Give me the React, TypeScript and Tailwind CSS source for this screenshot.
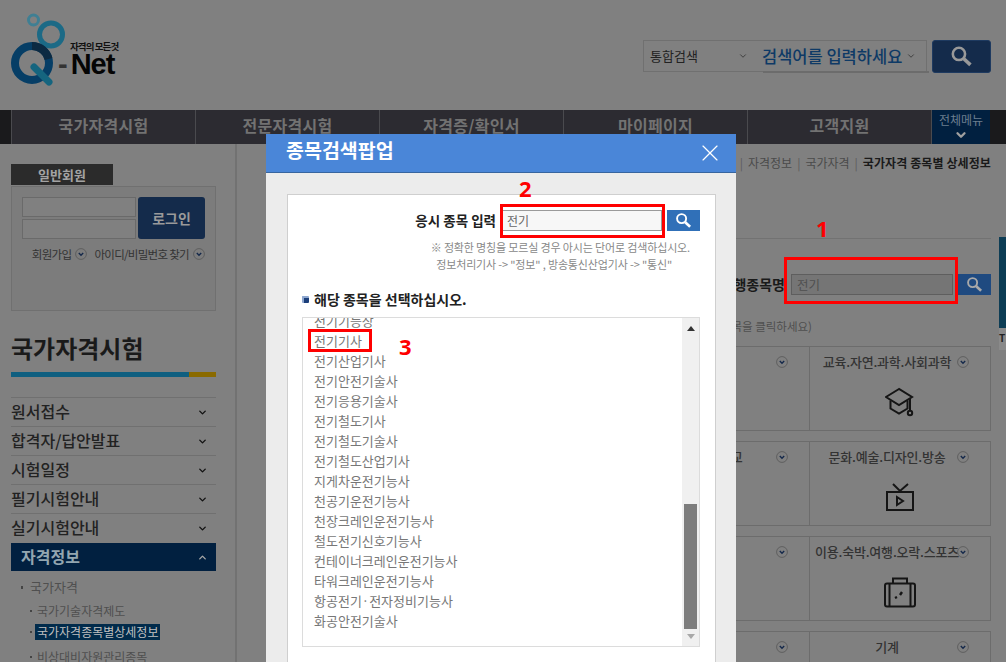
import { ChevronDown, ChevronUp, X } from "lucide-react";

const sideMenus = ["원서접수", "합격자/답안발표", "시험일정", "필기시험안내", "실기시험안내"];
const navMenus = ["국가자격시험", "전문자격시험", "자격증/확인서", "마이페이지", "고객지원"];
const results = [
    "전기기능장", "전기기사", "전기산업기사", "전기안전기술사", "전기응용기술사", "전기철도기사",
    "전기철도기술사", "전기철도산업기사", "지게차운전기능사", "천공기운전기능사", "천장크레인운전기능사",
    "철도전기신호기능사", "컨테이너크레인운전기능사", "타워크레인운전기능사", "항공전기·전자정비기능사", "화공안전기술사",
];

const Search = ({ size, color }: { size: number; color: string }) => (
    <svg width={size} height={size} viewBox="0 0 18 18" fill="none" stroke={color}>
        <circle cx="7" cy="7" r="4.8" strokeWidth="2" />
        <path d="M10.8 10.8 16 15.6" strokeWidth="2.8" />
    </svg>
);

const RoundChevron = ({ size = 12 }: { size?: number }) => (
    <svg width={size} height={size} viewBox="0 0 12 12" fill="none" className="shrink-0">
        <circle cx="6" cy="6" r="5.4" stroke="#5f5f5f" />
        <path d="M3.8 5 6 7.2 8.2 5" stroke="#14284a" strokeWidth="1.4" />
    </svg>
);

const Logo = () => (
    <div className="relative w-[110px] h-[74px] ml-[11px] mt-[13px]">
        <svg width="56" height="74" viewBox="0 0 56 74" fill="none" className="absolute left-0 top-0">
            <circle cx="22.5" cy="7" r="5" stroke="#3f7f93" strokeWidth="3" />
            <circle cx="40" cy="21.5" r="11.5" stroke="#1c6a86" strokeWidth="5" />
            <circle cx="21" cy="50" r="17" stroke="#063e66" strokeWidth="8" />
            <path d="M21 33a17 17 0 0 1 16.5 13" stroke="#0c2a42" strokeWidth="8" />
            <path d="M23 54 38 69" stroke="#15657f" strokeWidth="7" strokeLinecap="round" />
        </svg>
        <span className="absolute left-[59px] top-[27px] text-[9.5px] leading-3 font-bold tracking-[-0.9px] whitespace-nowrap text-[#111]">자격의 모든것</span>
        <span className="absolute left-[47px] top-[39px] text-[29px] leading-6 font-bold tracking-[-1px] whitespace-nowrap text-[#050505] font-['Liberation_Sans',sans-serif]"><span className="mr-[4px] text-[#333]">-</span>Net</span>
    </div>
);

const Header = () => (
    <header className="h-[110px] flex justify-between">
        <Logo />
        <div className="flex gap-[5px] mt-[40px] mr-[15px] h-[33px]">
            <div className="relative w-[284px] h-[32px] border border-[#707070] flex items-center pl-[6px] text-[13px] text-[#222]">
                <span className="w-[88px]">통합검색</span>
                <ChevronDown size={10} color="#333" strokeWidth={2} />
                <span className="ml-[14px] text-[16.5px] font-medium text-[#0e3a66] whitespace-nowrap">검색어를 입력하세요</span>
                <ChevronDown size={10} color="#333" strokeWidth={2} className="ml-[4px]" />
                <div className="absolute left-[119px] -right-[3px] -bottom-[2px] h-[2px] bg-[#6c6c6c]" />
            </div>
            <button className="w-[59px] rounded-[3px] bg-[#142b4b] border border-[#1e3a60] flex items-center justify-center">
                <Search size={23} color="#999" />
            </button>
        </div>
    </header>
);

const Nav = () => (
    <nav className="h-[34px] flex bg-[#1a1a1c]">
        <div className="w-[11px]" />
        {navMenus.map(menu => (
            <div key={menu} className="w-[184px] border-l border-[#4a4a4e] bg-[#2c2b31] flex items-center justify-center pb-[4px] text-[16px] tracking-[0.3px] font-bold text-[#727272]">{menu}</div>
        ))}
        <div className="w-[59px] border-l border-[#4a4a4e] bg-[#012040] flex flex-col items-center text-[12px] leading-4 text-[#6d7f8f] pt-[2px]">
            전체메뉴
            <ChevronDown size={14} color="#a0a0a0" strokeWidth={4} />
        </div>
    </nav>
);

const Sidebar = () => (
    <aside className="w-[237px] shrink-0 border-r-2 border-[#727272] pl-[11px] pt-[20px] pr-[19px]">
        <div className="w-[102px] h-[21px] bg-[#2b2b2b] text-[13px] font-bold text-[#a3a3a3] flex items-center justify-center">일반회원</div>
        <div className="mt-px h-[125px] border border-[#707070] bg-[#7c7c7c] pt-[10px] px-[10px]">
            <div className="flex gap-[2px]">
                <div className="flex flex-col gap-[2px]">
                    <div className="w-[114px] h-5 border border-[#6a6a6a] bg-[#808080]" />
                    <div className="w-[114px] h-5 border border-[#6a6a6a] bg-[#808080]" />
                </div>
                <button className="w-[67px] h-[42px] rounded-[3px] bg-[#142b4b] text-[14px] font-bold text-[#9a9a9a]">로그인</button>
            </div>
            <div className="mt-[7px] flex items-center justify-end gap-[4px] text-[11.5px] leading-4 tracking-[-0.7px] text-[#333] whitespace-nowrap">
                <span>회원가입</span>
                <RoundChevron />
                <span className="ml-[3px]">아이디/비밀번호 찾기</span>
                <RoundChevron />
            </div>
        </div>
        <h2 className="mt-[21px] text-[24px] leading-8 font-bold text-[#1a1a1a]">국가자격시험</h2>
        <div className="mt-[8px] h-[5px] flex">
            <div className="w-[178px] bg-[#0f5f80]" />
            <div className="flex-1 bg-[#8a6a00]" />
        </div>
        <ul className="mt-5">
            {sideMenus.map(menu => (
                <li key={menu} className="h-[29px] border-t border-[#707070] flex items-center justify-between pr-[8px] text-[16px] font-medium text-[#222]">
                    <span className="-mt-[3px]">{menu}</span>
                    <ChevronDown size={11} color="#111" strokeWidth={3} />
                </li>
            ))}
        </ul>
        <div className="h-[28px] mt-px bg-[#012040] flex items-center justify-between pl-[10px] pr-[8px] text-[16px] font-bold text-[#93a6b0]">
            <span className="-mt-[2px]">자격정보</span>
            <ChevronUp size={11} color="#a8a8a8" strokeWidth={3} />
        </div>
        <div className="mt-[8px] pl-[10px] text-[12px] leading-4 text-[#4f4f4f]">
            <div className="flex items-center gap-[7px] text-[13px]">
                <span className="w-[2px] h-[3px] bg-[#444]" />
                국가자격
            </div>
            <div className="mt-[8px] pl-[9px] flex items-center gap-[5px]">
                <span className="w-[2px] h-[2px] bg-[#444]" />
                국가기술자격제도
            </div>
            <div className="mt-[1px] pl-[9px] flex items-center gap-[3px] h-[24px] whitespace-nowrap">
                <span className="w-[2px] h-[2px] bg-[#444]" />
                <span className="bg-[#012b4b] text-[#c0c0c0] w-[125px] h-[16px] pl-[2px]">국가자격종목별상세정보</span>
            </div>
            <div className="pl-[9px] mt-[5px] flex items-center gap-[5px] whitespace-nowrap">
                <span className="w-[2px] h-[2px] bg-[#444]" />
                비상대비자원관리종목
            </div>
        </div>
    </aside>
);

const Cap = () => (
    <svg width="30" height="30" viewBox="0 0 30 30" fill="none" stroke="#151515" strokeWidth="2">
        <path d="M14 2 1 10l13 8 13-8z" />
        <path d="M5.5 13.5v8l8.5 5 8.5-5v-8" />
        <path d="M25 11v13" />
        <circle cx="25" cy="26" r="2.2" />
    </svg>
);

const Tv = () => (
    <svg width="30" height="30" viewBox="0 0 30 30" fill="none" stroke="#151515" strokeWidth="2">
        <path d="M2 10h26v18H2z" />
        <path d="M8 2l7 7 8-7" />
        <path d="M12 15l6 4-6 4z" />
    </svg>
);

const Suitcase = () => (
    <svg width="34" height="32" viewBox="0 0 34 32" fill="none" stroke="#151515" strokeWidth="2">
        <rect x="2" y="6.5" width="30" height="23" rx="2" />
        <path d="M10 6V1.5h14V6" />
        <path d="M6.5 7v23M27.5 7v23" />
        <path d="M19 15l-2 3M14 20l-2 1" strokeWidth="2.4" />
    </svg>
);

const cards = [
    { left: "금융.보험", right: "교육.자연.과학.사회과학", icon: <Cap /> },
    { left: "사회복지.종교", right: "문화.예술.디자인.방송", icon: <Tv /> },
    { left: "경비.청소", right: "이용.숙박.여행.오락.스포츠", icon: <Suitcase /> },
    { left: "광업자원", right: "기계", icon: null },
];

const Card = ({ title, icon, first }: { title: string; icon?: React.ReactNode; first?: boolean }) => (
    <div className={`${first ? "border-r-0" : ""} w-[182px] h-[85px] border border-[#6c6c6c] flex flex-col items-center pt-[3px]`}>
        <div className="w-full h-[24px] flex items-center pr-[26px] relative">
            <span className="flex-1 text-center text-[13px] font-medium tracking-[-0.2px] text-[#333] whitespace-nowrap">{title}</span>
            <span className="absolute right-[21px] top-[6px]"><RoundChevron /></span>
        </div>
        <div className="mt-[13px]">{icon}</div>
    </div>
);

const Content = () => (
    <main className="flex-1 min-w-0 relative pr-[15px]">
        <div className="h-[27px] flex items-end justify-end gap-[5px] text-[12px] leading-4 text-[#4a4a4a] whitespace-nowrap">
            <span className="text-[#5c5c5c]">|</span>
            자격정보
            <span className="text-[#5c5c5c]">|</span>
            국가자격
            <span className="text-[#5c5c5c]">|</span>
            <b className="text-[#1a1a1a] tracking-[0.1px]">국가자격 종목별 상세정보</b>
        </div>
        <div className="mt-[67px] ml-[60px] border-t border-[#727272]">
            <div className="mt-[35px] flex items-center justify-end h-[21px]">
                <b className="text-[14px] text-[#1a1a1a] mr-[6px]">시행종목명</b>
                <div className="w-[162px] h-[21px] border border-[#5e5e5e] bg-[#757575] text-[12.5px] text-[#4f4f4f] pl-[5px] leading-[19px] mr-[5px]">전기</div>
                <button className="w-[33px] h-[21px] bg-[#1f4a80] flex items-center justify-center"><Search size={17} color="#a9a9a9" /></button>
            </div>
            <p className="mt-[23px] text-right pr-[179px] text-[11.5px] leading-4 text-[#4f4f4f] whitespace-nowrap">종목을 클릭하세요)</p>
            <div className="mt-[12px] grid grid-cols-[182px_182px] justify-end gap-y-[10px]">
                {cards.map(card => (
                    <div key={card.right} className="contents">
                        <Card title={card.left} first />
                        <Card title={card.right} icon={card.icon} />
                    </div>
                ))}
            </div>
        </div>
        <div className="absolute right-0 top-[93px] w-[7px] h-[113px] bg-[#0d3d55] flex flex-col justify-end">
            <div className="h-[22px] bg-[#8a8a8a] text-[10px] leading-5 font-bold text-[#222]">T</div>
        </div>
    </main>
);

const Marker = ({ className, label, labelClass }: { className: string; label: string; labelClass: string }) => (
    <>
        <div className={`absolute border-[3px] border-[#ff0000] pointer-events-none ${className}`} />
        <span className={`absolute text-[22px] leading-6 font-bold text-[#ff0000] font-['Open_Sans',sans-serif] ${labelClass}`}>{label}</span>
    </>
);

const Modal = () => (
    <div className="absolute left-[266px] top-[134px] w-[470px] h-[528px] bg-[#ececec] overflow-hidden">
        <div className="h-[39px] bg-[#4a86d8] border-b border-[#37659f] flex items-center justify-between pl-[20px] pr-[12px]">
            <h3 className="text-[19.5px] leading-7 -mt-[6px] font-bold text-white">종목검색팝업</h3>
            <X size={28} color="#fff" strokeWidth={1} className="-mt-[1px]" />
        </div>
        <div className="mt-[21px] ml-[21px] w-[429px] h-[480px] bg-white border border-[#cfcfcf] pt-[15px] pl-[14px] pr-[15px]">
            <div className="flex items-center justify-end h-[21px]">
                <b className="text-[13.5px] text-[#222] mr-[6px]">응시 종목 입력</b>
                <div className="w-[160px] h-[21px] border border-[#9a9a9a] bg-[#f7f7f7] text-[12px] text-[#666] pl-[4px] leading-[19px] mr-[5px]">전기</div>
                <button className="w-[33px] h-[21px] bg-[#3070b8] flex items-center justify-center"><Search size={17} color="#fff" /></button>
            </div>
            <div className="mt-[8px] text-[11px] leading-[17px] tracking-[-0.15px] text-[#888] flex flex-col items-end">
                <p className="pr-[10px]">※ 정확한 명칭을 모르실 경우 아시는 단어로 검색하십시오.</p>
                <p className="pr-[28px]">정보처리기사 -&gt; "정보" , 방송통신산업기사 -&gt; "통신"</p>
            </div>
            <div className="mt-[17px] h-[18px] flex items-center gap-[5px] text-[14px] font-bold text-[#222]">
                <span className="w-[7px] h-[7px] rounded-[1px] bg-[#1c3f7a] border-l-2 border-t-2 border-[#8fa8d0]" />
                해당 종목을 선택하십시오.
            </div>
            <div className="mt-[9px] h-[330px] border border-[#dcdcdc] flex overflow-hidden">
                <ul className="flex-1 pl-[11px] -mt-[7px] text-[13px] leading-5 text-[#777]">
                    {results.map(item => <li key={item}>{item}</li>)}
                </ul>
                <div className="w-[17px] bg-[#f0f0f0] flex flex-col items-center pt-[8px] pb-[7px]">
                    <span className="w-0 h-0 border-x-[4px] border-x-transparent border-b-[5px] border-b-[#333]" />
                    <div className="mt-auto w-[13px] h-[125px] bg-[#7d7d7d]" />
                    <span className="mt-[5px] w-0 h-0 border-x-[4px] border-x-transparent border-t-[5px] border-t-[#a8a8a8]" />
                </div>
            </div>
        </div>
    </div>
);

export default function App() {
    return (
        <div className="relative w-[1006px] h-[662px] overflow-hidden bg-[#808080] font-['Noto_Sans_CJK_KR','Noto_Sans',sans-serif]">
            <Header />
            <Nav />
            <div className="flex h-[518px]">
                <Sidebar />
                <Content />
            </div>
            <Modal />
            <Marker className="left-[784px] top-[257px] w-[174px] h-[47px]" label="1" labelClass="left-[816px] top-[216px]" />
            <Marker className="left-[500px] top-[204px] w-[165px] h-[34px]" label="2" labelClass="left-[519px] top-[176px]" />
            <Marker className="left-[308px] top-[329px] w-[64px] h-[23px]" label="3" labelClass="left-[399px] top-[334px]" />
        </div>
    );
}
